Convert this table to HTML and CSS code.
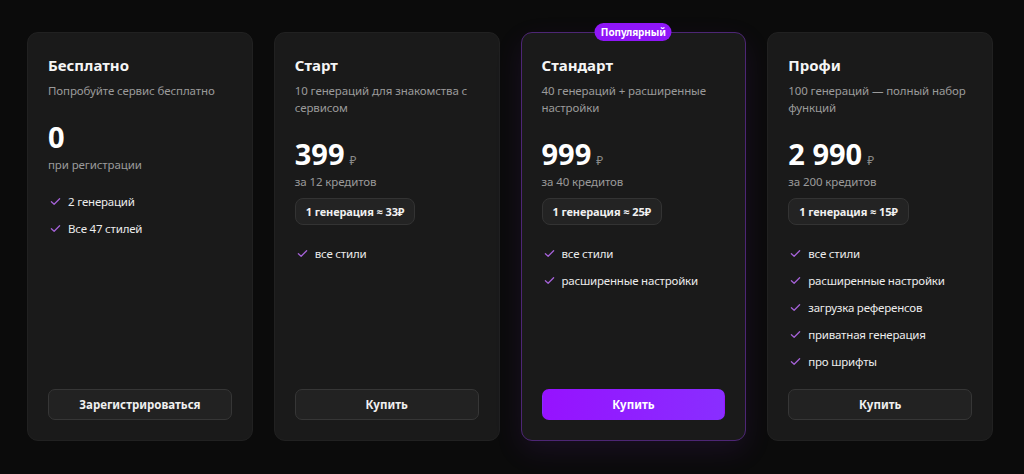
FILE: index.html
```html
<!DOCTYPE html>
<html lang="ru">
<head>
    <meta charset="UTF-8">
    <meta name="viewport" content="width=device-width, initial-scale=1.0">
    <title>Тарифы</title>
    <link rel="stylesheet" href="styles.css">
</head>
<body>
    <div class="plans">
        <div class="card">
            <div class="card-title">Бесплатно</div>
            <div class="card-desc">Попробуйте сервис бесплатно</div>
            <div class="price">0</div>
            <div class="price-note">при регистрации</div>
            <ul class="features">
                <li><svg viewBox="0 0 12 12"><path d="M1.5 6.3 L4.5 9 L10.5 3"/></svg>2 генераций</li>
                <li><svg viewBox="0 0 12 12"><path d="M1.5 6.3 L4.5 9 L10.5 3"/></svg>Все 47 стилей</li>
            </ul>
            <a href="#" class="btn">Зарегистрироваться</a>
        </div>
        <div class="card">
            <div class="card-title">Старт</div>
            <div class="card-desc">10 генераций для знакомства с сервисом</div>
            <div class="price">399<span class="currency">₽</span></div>
            <div class="price-note">за 12 кредитов</div>
            <div class="per-gen">1 генерация ≈ 33₽</div>
            <ul class="features">
                <li><svg viewBox="0 0 12 12"><path d="M1.5 6.3 L4.5 9 L10.5 3"/></svg>все стили</li>
            </ul>
            <a href="#" class="btn">Купить</a>
        </div>
        <div class="card popular">
            <span class="badge">Популярный</span>
            <div class="card-title">Стандарт</div>
            <div class="card-desc">40 генераций + расширенные настройки</div>
            <div class="price">999<span class="currency">₽</span></div>
            <div class="price-note">за 40 кредитов</div>
            <div class="per-gen">1 генерация ≈ 25₽</div>
            <ul class="features">
                <li><svg viewBox="0 0 12 12"><path d="M1.5 6.3 L4.5 9 L10.5 3"/></svg>все стили</li>
                <li><svg viewBox="0 0 12 12"><path d="M1.5 6.3 L4.5 9 L10.5 3"/></svg>расширенные настройки</li>
            </ul>
            <a href="#" class="btn btn-primary">Купить</a>
        </div>
        <div class="card">
            <div class="card-title">Профи</div>
            <div class="card-desc">100 генераций — полный набор функций</div>
            <div class="price">2 990<span class="currency">₽</span></div>
            <div class="price-note">за 200 кредитов</div>
            <div class="per-gen">1 генерация ≈ 15₽</div>
            <ul class="features">
                <li><svg viewBox="0 0 12 12"><path d="M1.5 6.3 L4.5 9 L10.5 3"/></svg>все стили</li>
                <li><svg viewBox="0 0 12 12"><path d="M1.5 6.3 L4.5 9 L10.5 3"/></svg>расширенные настройки</li>
                <li><svg viewBox="0 0 12 12"><path d="M1.5 6.3 L4.5 9 L10.5 3"/></svg>загрузка референсов</li>
                <li><svg viewBox="0 0 12 12"><path d="M1.5 6.3 L4.5 9 L10.5 3"/></svg>приватная генерация</li>
                <li><svg viewBox="0 0 12 12"><path d="M1.5 6.3 L4.5 9 L10.5 3"/></svg>про шрифты</li>
            </ul>
            <a href="#" class="btn">Купить</a>
        </div>
    </div>
</body>
</html>
```

FILE: styles.css
```css
* {
    box-sizing: border-box;
}
body {
    margin: 0;
    background-color: #0b0b0b;
    font-family: "Noto Sans", "Open Sans", Arial, sans-serif;
    color: #f2f2f2;
    height: 100vh;
    overflow: hidden;
}
.plans {
    display: flex;
    gap: 21px;
    height: 100%;
    padding: 32px 31px 33px 27px;
}
.card {
    flex: 1;
    position: relative;
    display: flex;
    flex-direction: column;
    background-color: #1a1a1a;
    border: 1px solid #212121;
    border-radius: 11px;
    padding: 22px 20px 20px;
}
.card.popular {
    border-color: #4d2675;
    box-shadow: 0 10px 28px rgba(120, 40, 200, 0.12);
}
.badge {
    position: absolute;
    top: -10px;
    left: 50%;
    transform: translateX(-50%);
    background-color: #8f16f8;
    color: #fff;
    font-size: 10px;
    font-weight: bold;
    line-height: 18px;
    padding: 0 6px;
    border-radius: 9px;
    white-space: nowrap;
    letter-spacing: -0.1px;
}
.card-title {
    font-size: 15px;
    font-weight: bold;
    line-height: 20px;
    color: #f5f5f5;
}
.card-desc {
    margin-top: 7px;
    font-size: 11.5px;
    line-height: 17px;
    color: #9a9a9a;
    letter-spacing: -0.1px;
}
.price {
    margin-top: 19px;
    font-size: 29px;
    font-weight: bold;
    line-height: 38px;
    height: 38px;
    color: #fff;
}
.currency {
    margin-left: 5px;
    font-size: 12px;
    font-weight: normal;
    line-height: 1;
    color: #8a8a8a;
}
.price-note {
    font-size: 11.5px;
    line-height: 17px;
    color: #9a9a9a;
    letter-spacing: -0.1px;
}
.per-gen {
    align-self: flex-start;
    margin-top: 8px;
    padding: 0 10px;
    height: 27px;
    line-height: 25px;
    font-size: 11px;
    font-weight: bold;
    color: #f0f0f0;
    background-color: #232323;
    border: 1px solid #333;
    border-radius: 8px;
    letter-spacing: -0.1px;
}
.features {
    list-style: none;
    margin: 20px 0 0;
    padding: 0;
    display: flex;
    flex-direction: column;
    gap: 10px;
}
.features li {
    display: flex;
    align-items: center;
    font-size: 11.5px;
    line-height: 17px;
    color: #ececec;
    letter-spacing: -0.2px;
}
.features svg {
    width: 11px;
    height: 11px;
    margin: 0 7px 0 2px;
    fill: none;
    stroke: #a562d8;
    stroke-width: 1.4;
    stroke-linecap: round;
    stroke-linejoin: round;
}
.btn {
    margin-top: auto;
    display: block;
    height: 31px;
    line-height: 29px;
    text-align: center;
    font-size: 11.5px;
    font-weight: bold;
    color: #f0f0f0;
    background-color: #222;
    border: 1px solid #363636;
    border-radius: 7px;
    text-decoration: none;
}
.btn-primary {
    color: #fff;
    border-color: transparent;
    background: linear-gradient(90deg, #9612ff, #892eff);
}
```
